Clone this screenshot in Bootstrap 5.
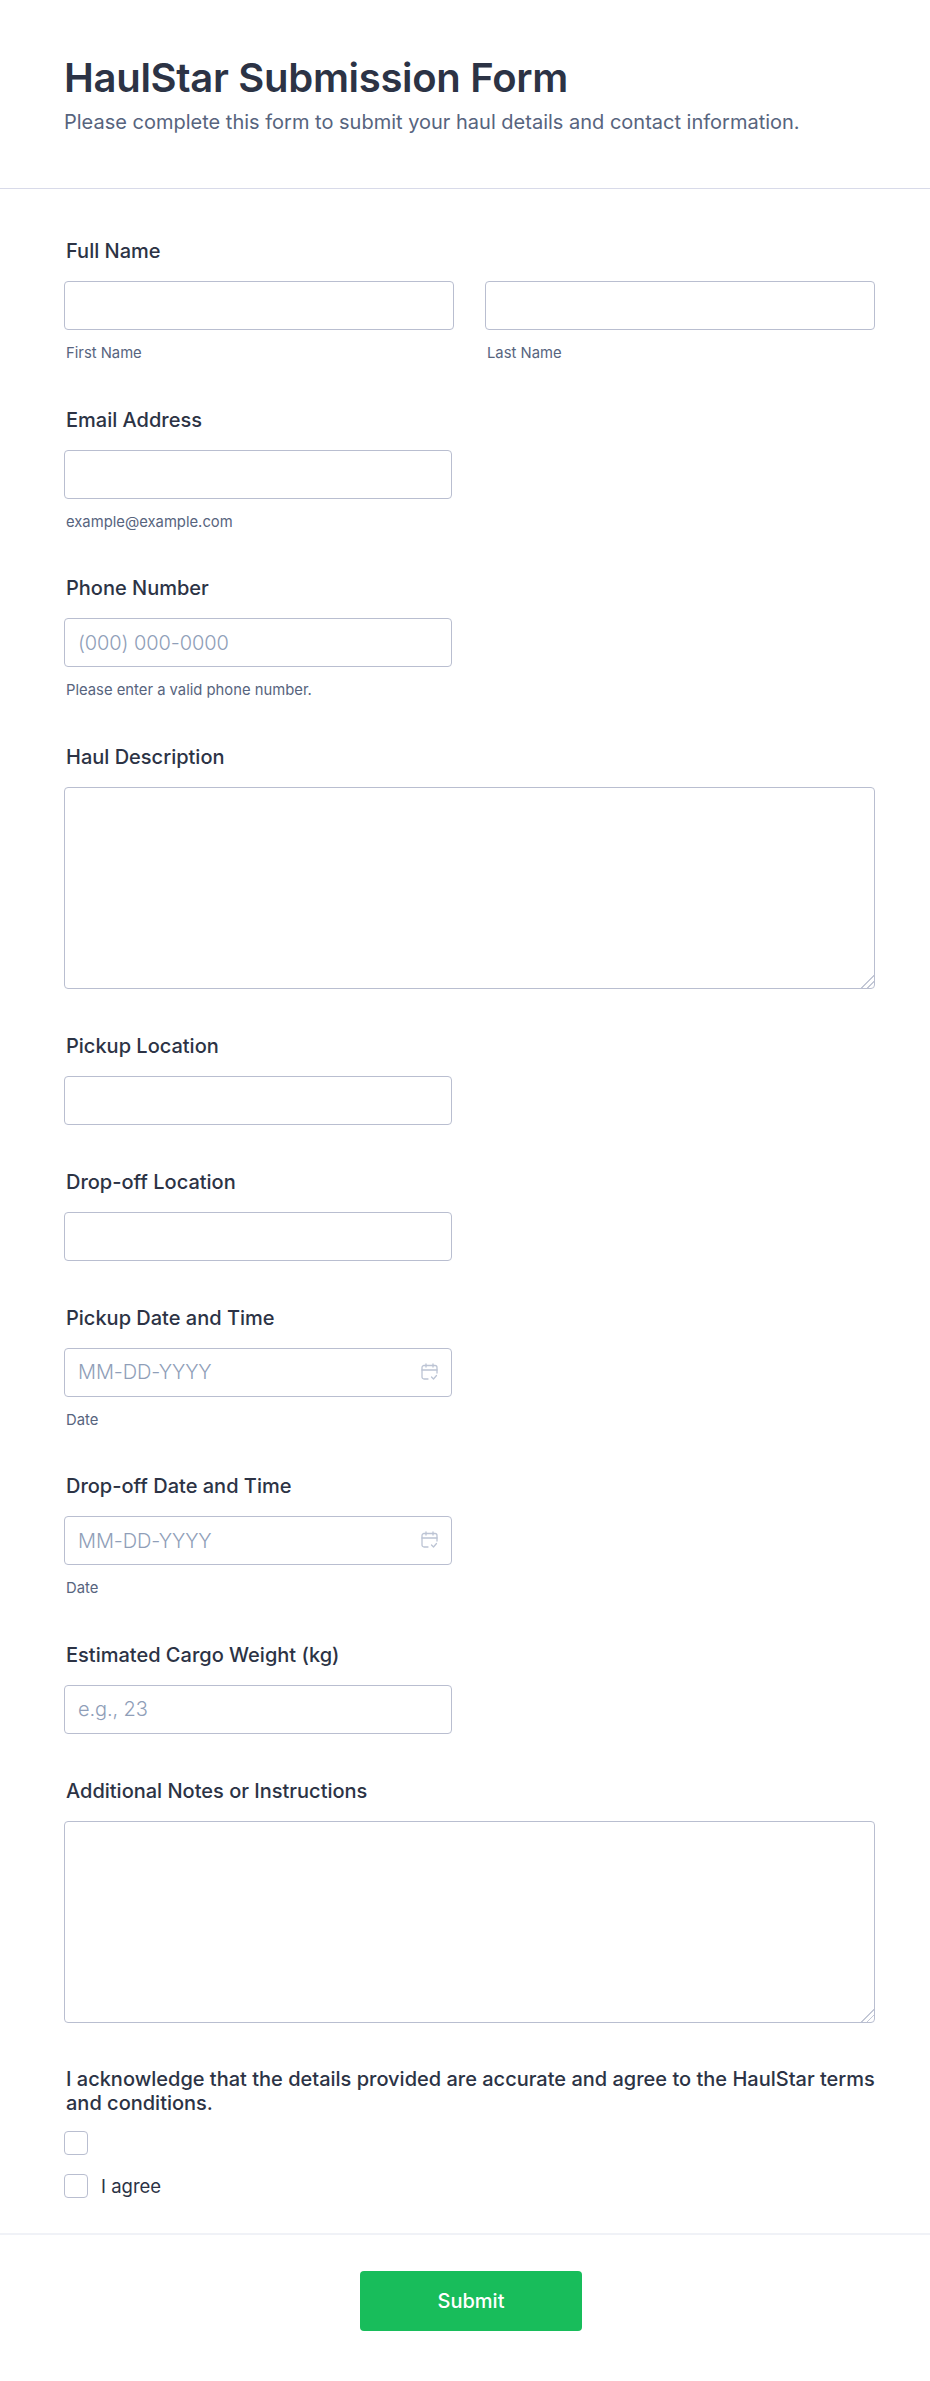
<!DOCTYPE html>
<html lang="en">
<head>
  <meta charset="UTF-8">
  <meta name="viewport" content="width=device-width, initial-scale=1.0">
  <title>HaulStar Submission Form</title>
  <link rel="stylesheet" href="https://cdn.jsdelivr.net/npm/bootstrap@5.3.1/dist/css/bootstrap.min.css">
  <style>
    body {
      background-color: #fff;
      font-family: Inter, "Liberation Sans", sans-serif;
      color: #2c3345;
    }

    .form-head {
      height: 189px;
      padding: 55px 64px 0;
      border-bottom: 1px solid #d8dae9;
    }

    .form-head h1 {
      font-size: 40px;
      line-height: 45px;
      font-weight: 600;
      letter-spacing: -0.3px;
      margin-bottom: 7px;
    }

    .form-head p {
      font-size: 20px;
      line-height: 30px;
      color: #57647e;
      margin: 0;
    }

    .form-body {
      padding: 49px 54px 0 64px;
    }

    .field {
      margin-bottom: 44px;
    }

    .field-label {
      display: block;
      font-size: 20px;
      line-height: 26px;
      font-weight: 450;
      padding-left: 2px;
      margin-bottom: 17px;
      color: #2c3345;
    }

    .form-control.box {
      height: 49px;
      width: 388px;
      padding: 0 13px;
      font-size: 20px;
      color: #2c3345;
      border: 1px solid #b9bed0;
      border-radius: 4px;
      box-shadow: none;
    }

    .form-control.box::placeholder {
      color: #8f9eb8;
      font-weight: 300;
      letter-spacing: -0.1px;
    }

    .name-row {
      display: flex;
      gap: 31px;
    }

    .name-row > div {
      width: 390px;
    }

    .name-row .form-control.box {
      width: 390px;
    }

    textarea.form-control.box {
      display: block;
      width: 811px;
      height: 202px;
      min-height: 0;
    }

    textarea.form-control.box::-webkit-resizer {
      background: linear-gradient(135deg, transparent 55%, #c3c8d6 55%, #c3c8d6 61%, transparent 61%, transparent 74%, #c3c8d6 74%, #c3c8d6 80%, transparent 80%);
    }

    .hint {
      display: block;
      font-size: 14.8px;
      line-height: 17.5px;
      color: #57647e;
      margin-top: 15px;
      padding-left: 2px;
    }

    .date-wrap {
      position: relative;
      width: 388px;
    }

    .date-wrap svg {
      position: absolute;
      top: 15px;
      right: 14px;
    }

    .ack-text {
      font-size: 20px;
      line-height: 24px;
      font-weight: 450;
      margin-bottom: 16px;
      padding-left: 2px;
    }

    .form-check-input.tick {
      width: 24px;
      height: 24px;
      margin: 0;
      float: none;
      flex: none;
      border: 1px solid #b9bed0;
      border-radius: 4px;
    }

    .tick-row {
      display: flex;
      align-items: center;
      gap: 13px;
      font-size: 18.5px;
      line-height: 24px;
      margin-bottom: 19px;
    }

    .form-foot {
      margin-top: 35px;
      border-top: 2px solid #f0f2f7;
      padding: 36px 0 0 12px;
      text-align: center;
    }

    .btn.send {
      width: 222px;
      height: 60px;
      font-size: 20px;
      font-weight: 500;
      color: #fff;
      background-color: #18bd5b;
      border: 0;
      border-radius: 4px;
    }
  </style>
</head>
<body>
  <div class="form-head">
    <h1>HaulStar Submission Form</h1>
    <p>Please complete this form to submit your haul details and contact information.</p>
  </div>

  <form class="form-body">
    <div class="field">
      <label class="field-label">Full Name</label>
      <div class="name-row">
        <div>
          <input type="text" class="form-control box">
          <span class="hint">First Name</span>
        </div>
        <div>
          <input type="text" class="form-control box">
          <span class="hint">Last Name</span>
        </div>
      </div>
    </div>

    <div class="field">
      <label class="field-label">Email Address</label>
      <input type="email" class="form-control box">
      <span class="hint">example@example.com</span>
    </div>

    <div class="field">
      <label class="field-label">Phone Number</label>
      <input type="tel" class="form-control box" placeholder="(000) 000-0000">
      <span class="hint">Please enter a valid phone number.</span>
    </div>

    <div class="field">
      <label class="field-label">Haul Description</label>
      <textarea class="form-control box"></textarea>
    </div>

    <div class="field">
      <label class="field-label">Pickup Location</label>
      <input type="text" class="form-control box">
    </div>

    <div class="field">
      <label class="field-label">Drop-off Location</label>
      <input type="text" class="form-control box">
    </div>

    <div class="field">
      <label class="field-label">Pickup Date and Time</label>
      <div class="date-wrap">
        <input type="text" class="form-control box" placeholder="MM-DD-YYYY">
        <svg width="17" height="18" viewBox="0 0 17 18" fill="none" stroke="#bcc4d4" stroke-width="1.3" stroke-linecap="round" stroke-linejoin="round">
          <path d="M7 16H3a2 2 0 0 1-2-2V4.500a2 2 0 0 1 2-2h11a2 2 0 0 1 2 2V10"/>
          <path d="M1 7h15M5 1v3M12 1v3M10.500 14l2 2 3-3.500"/>
        </svg>
      </div>
      <span class="hint">Date</span>
    </div>

    <div class="field">
      <label class="field-label">Drop-off Date and Time</label>
      <div class="date-wrap">
        <input type="text" class="form-control box" placeholder="MM-DD-YYYY">
        <svg width="17" height="18" viewBox="0 0 17 18" fill="none" stroke="#bcc4d4" stroke-width="1.3" stroke-linecap="round" stroke-linejoin="round">
          <path d="M7 16H3a2 2 0 0 1-2-2V4.500a2 2 0 0 1 2-2h11a2 2 0 0 1 2 2V10"/>
          <path d="M1 7h15M5 1v3M12 1v3M10.500 14l2 2 3-3.500"/>
        </svg>
      </div>
      <span class="hint">Date</span>
    </div>

    <div class="field">
      <label class="field-label">Estimated Cargo Weight (kg)</label>
      <input type="text" class="form-control box" placeholder="e.g., 23">
    </div>

    <div class="field">
      <label class="field-label">Additional Notes or Instructions</label>
      <textarea class="form-control box"></textarea>
    </div>

    <div>
      <p class="ack-text">I acknowledge that the details provided are accurate and agree to the HaulStar terms and conditions.</p>
      <div class="tick-row"><input type="checkbox" class="form-check-input tick"></div>
      <div class="tick-row"><input type="checkbox" class="form-check-input tick"><span>I agree</span></div>
    </div>
  </form>

  <div class="form-foot">
    <button type="button" class="btn send">Submit</button>
  </div>
  <script src="https://cdn.jsdelivr.net/npm/bootstrap@5.3.1/dist/js/bootstrap.bundle.min.js"></script>
</body>
</html>
